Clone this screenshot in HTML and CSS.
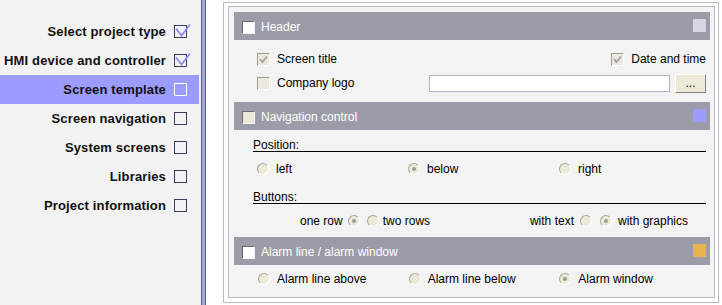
FILE: index.html
```html
<!DOCTYPE html>
<html lang="en">
<head>
  <meta charset="UTF-8">
  <title>Screen template</title>
  <link rel="stylesheet" href="styles.css">
</head>
<body>
  <div class="wizard">
    <div class="steps">
      <div class="step done">
        <span>Select project type</span>
        <span class="box"><svg width="18" height="15" viewBox="0 0 18 15"><polyline points="2,5.5 7.5,12.5 16,1.5" fill="none" stroke="#8c8cf0" stroke-width="1.8"/></svg></span>
      </div>
      <div class="step done">
        <span>HMI device and controller</span>
        <span class="box"><svg width="18" height="15" viewBox="0 0 18 15"><polyline points="2,5.5 7.5,12.5 16,1.5" fill="none" stroke="#8c8cf0" stroke-width="1.8"/></svg></span>
      </div>
      <div class="step current">
        <span>Screen template</span>
        <span class="box"></span>
      </div>
      <div class="step">
        <span>Screen navigation</span>
        <span class="box"></span>
      </div>
      <div class="step">
        <span>System screens</span>
        <span class="box"></span>
      </div>
      <div class="step">
        <span>Libraries</span>
        <span class="box"></span>
      </div>
      <div class="step">
        <span>Project information</span>
        <span class="box"></span>
      </div>
    </div>

    <div class="divider"></div>

    <div class="content">
      <div class="frame">
        <div class="panel">

          <div class="bar">
            <span class="bar-check"></span>
            <span>Header</span>
            <span class="swatch swatch-header"></span>
          </div>
          <div class="header-body">
            <div class="row">
              <span class="opt"><span class="check"><svg width="11" height="11" viewBox="0 0 11 11"><polyline points="2,5 4.5,8 9,2.5" fill="none" stroke="#a4a29a" stroke-width="1.8"/></svg></span>Screen title</span>
              <span class="opt"><span class="check"><svg width="11" height="11" viewBox="0 0 11 11"><polyline points="2,5 4.5,8 9,2.5" fill="none" stroke="#a4a29a" stroke-width="1.8"/></svg></span>Date and time</span>
            </div>
            <div class="row">
              <span class="opt"><span class="check"></span>Company logo</span>
              <span class="logo-path"></span>
              <span class="browse">...</span>
            </div>
          </div>

          <div class="bar">
            <span class="bar-check beige"></span>
            <span>Navigation control</span>
            <span class="swatch swatch-nav"></span>
          </div>
          <div class="nav-body">
            <div class="group-title">Position:</div>
            <div class="choices">
              <span class="opt-radio"><span class="radio"></span>left</span>
              <span class="opt-radio"><span class="radio on"></span>below</span>
              <span class="opt-radio"><span class="radio"></span>right</span>
            </div>
            <div class="group-title second">Buttons:</div>
            <div class="layout-row">
              <span class="pair rows">
                <span>one row</span>
                <span class="radio on"></span>
                <span class="radio"></span>
                <span>two rows</span>
              </span>
              <span class="pair look">
                <span>with text</span>
                <span class="radio"></span>
                <span class="radio on"></span>
                <span>with graphics</span>
              </span>
            </div>
          </div>

          <div class="bar">
            <span class="bar-check"></span>
            <span>Alarm line / alarm window</span>
            <span class="swatch swatch-alarm"></span>
          </div>
          <div class="alarm-body">
            <div class="choices">
              <span class="opt-radio"><span class="radio"></span>Alarm line above</span>
              <span class="opt-radio"><span class="radio"></span>Alarm line below</span>
              <span class="opt-radio"><span class="radio on"></span>Alarm window</span>
            </div>
          </div>

        </div>
      </div>
    </div>
  </div>
</body>
</html>
```

FILE: styles.css
```css
body {
  margin: 0;
  font-family: "Liberation Sans", Arial, sans-serif;
  font-size: 12px;
  color: #000;
  background: #fff;
}
.wizard {
  display: flex;
  height: 305px;
}

/* wizard steps */
.steps {
  width: 201px;
  background: #f2f2f2;
  padding-top: 17px;
  box-sizing: border-box;
}
.step {
  height: 29px;
  margin-right: 2px;
  padding-right: 12px;
  display: flex;
  align-items: center;
  justify-content: flex-end;
  gap: 8px;
  font-size: 13px;
  font-weight: bold;
  letter-spacing: 0.15px;
  color: #111;
}
.step.current {
  background: #9c9cff;
}
.step .box {
  position: relative;
  width: 13px;
  height: 13px;
  box-sizing: border-box;
  border: 1px solid #3c3a5e;
}
.step.current .box {
  border-color: #fff;
}
.step .box svg {
  position: absolute;
  left: -1px;
  top: -3px;
  overflow: visible;
}
.divider {
  width: 5px;
  box-sizing: border-box;
  border-left: 1px solid #5a5888;
  border-right: 1px solid #5a5888;
  background: #a8a8dc;
}

/* main area */
.content {
  flex: 1;
  padding: 2px 0 0 17px;
}
.frame {
  width: 496px;
  height: 301px;
  box-sizing: border-box;
  border: 1px solid #b8b8c8;
  padding: 3px 3px 4px 4px;
}
.panel {
  height: 100%;
  box-sizing: border-box;
  border: 1px solid #b8b8c8;
  background: #f3f3f3;
  padding: 5px 4px 0 5px;
}
.bar {
  height: 28px;
  box-sizing: border-box;
  padding: 2px 4px 0 8px;
  background: #9c9ca8;
  color: #fff;
  display: flex;
  align-items: center;
}
.bar-check {
  width: 13px;
  height: 13px;
  box-sizing: border-box;
  border: 1px solid;
  border-color: #6c6c70 #f4f4f4 #f4f4f4 #6c6c70;
  background: #fff;
  margin-right: 6px;
}
.bar-check.beige {
  background: #ece9d8;
}
.swatch {
  margin-left: auto;
  margin-top: -3px;
  width: 13px;
  height: 13px;
}
.swatch-header { background: #d6d6e8; }
.swatch-nav { background: #9c9cff; }
.swatch-alarm { background: #e8b452; }

/* header section */
.header-body {
  padding: 10px 4px 10px 23px;
  display: flex;
  flex-direction: column;
  gap: 6px;
}
.row {
  height: 18px;
  display: flex;
  align-items: center;
  justify-content: space-between;
}
.opt {
  display: flex;
  align-items: center;
  gap: 7px;
}
.check {
  width: 13px;
  height: 13px;
  box-sizing: border-box;
  border: 1px solid;
  border-color: #a09e94 #fff #fff #a09e94;
  background: #ebe9df;
}
.check svg {
  display: block;
}
.logo-path {
  margin-left: auto;
  width: 241px;
  height: 17px;
  box-sizing: border-box;
  border: 1px solid #b4b4c4;
  background: #fff;
}
.browse {
  margin-left: 5px;
  width: 31px;
  height: 19px;
  box-sizing: border-box;
  border: 1px solid;
  border-color: #fff #808080 #808080 #fff;
  background: #ece9d8;
  text-align: center;
  line-height: 17px;
}

/* navigation + alarm sections */
.nav-body {
  padding: 9px 4px 9px 19px;
}
.group-title {
  line-height: 11px;
  padding-top: 1px;
  border-bottom: 1px solid #000;
}
.group-title.second {
  margin-top: 15px;
}
.choices {
  display: grid;
  grid-template-columns: repeat(3, 1fr);
  height: 14px;
  margin-top: 10px;
}
.opt-radio {
  display: flex;
  align-items: center;
  gap: 7px;
  padding-left: 4px;
}
.radio {
  position: relative;
  width: 12px;
  height: 12px;
  box-sizing: border-box;
  border-radius: 50%;
  border: 1px solid;
  border-color: #a7a69c #fff #fff #a7a69c;
  background: #ece9d8;
}
.radio.on::after {
  content: "";
  position: absolute;
  left: 3px;
  top: 3px;
  width: 4px;
  height: 4px;
  border-radius: 50%;
  background: #9c9b94;
}
.layout-row {
  display: flex;
  justify-content: space-between;
  height: 14px;
  margin-top: 10px;
  padding: 0 18px 0 47px;
}
.pair {
  display: flex;
  align-items: center;
}
.rows .radio:nth-child(2) { margin: 0 7px 0 5px; }
.rows .radio:nth-child(3) { margin-right: 4px; }
.look .radio:nth-child(2) { margin: 0 8px 0 6px; }
.look .radio:nth-child(3) { margin-right: 6px; }
.alarm-body {
  padding: 7px 4px 11px 20px;
}
.alarm-body .choices {
  margin-top: 0;
}
```
